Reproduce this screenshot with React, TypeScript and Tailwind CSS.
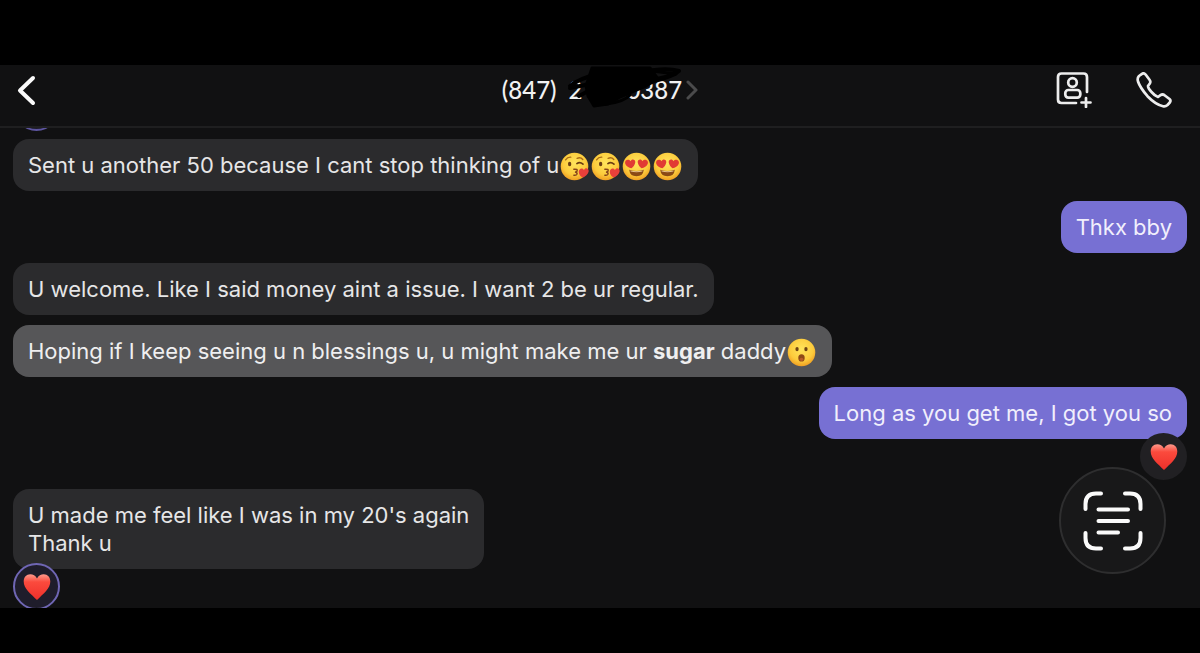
import * as React from "react";
import clsx from "clsx";

interface MessageProps {
  from: "me" | "them";
  highlighted?: boolean;
  className?: string;
  reaction?: React.ReactNode;
  children: React.ReactNode;
}

function Message({ from, highlighted, className, reaction, children }: MessageProps) {
  return (
    <li className={clsx("flex", from === "me" && "justify-end", className)}>
      <div
        className={clsx(
          "relative rounded-2xl px-[15px] py-3",
          from === "me" && "bg-[#7770d3] text-[#f1effc]",
          from === "them" && !highlighted && "bg-[#2b2b2d] text-[#e6e6e7]",
          highlighted && "bg-[#565658] text-[#efeff0]"
        )}
      >
        <p>{children}</p>
        {reaction}
      </div>
    </li>
  );
}

function EmojiBase({ id, label, children }: { id: string; label: string; children: React.ReactNode }) {
  return (
    <svg viewBox="0 0 28 28" role="img" aria-label={label} className="mx-px -my-2 inline-block size-[29px] align-baseline">
      <defs>
        <radialGradient id={id} cx="0.5" cy="0.38" r="0.65">
          <stop offset="0" stopColor="#ffe45c" />
          <stop offset="0.65" stopColor="#fccb3c" />
          <stop offset="1" stopColor="#ee981f" />
        </radialGradient>
      </defs>
      <circle cx="14" cy="14" r="13.3" fill={`url(#${id})`} />
      {children}
    </svg>
  );
}

function KissEmoji() {
  const id = React.useId();
  return (
    <EmojiBase id={id} label="face blowing a kiss">
      <path d="M5.4 7.6Q7.3 4.8 10.4 5" fill="none" stroke="#a86b17" strokeWidth="1.3" strokeLinecap="round" />
      <path d="M16.5 6.2Q19.7 4.6 22 7.2" fill="none" stroke="#a86b17" strokeWidth="1.3" strokeLinecap="round" />
      <ellipse cx="9.3" cy="11.6" rx="1.6" ry="2.2" fill="#6b3d13" />
      <path d="M16.3 11.2Q19.2 9 22.2 11.7" fill="none" stroke="#6b3d13" strokeWidth="1.6" strokeLinecap="round" />
      <path
        d="M13.4 16.6Q17.4 16.3 16.4 18.4Q15.9 19.3 14.5 19.4Q17 19.8 16.3 21.5Q15.7 22.8 13.4 22.4"
        fill="none"
        stroke="#87451a"
        strokeWidth="1.5"
        strokeLinecap="round"
      />
      <path
        d="M23.2 17.4C24.5 14.2 28.6 16.1 27.5 19.4C26.8 21.8 24.5 23.6 22.3 24.7C20 23.8 18.2 21.7 18.1 19.2C18 15.9 21.8 14.6 23.2 17.4Z"
        fill="#e8403a"
      />
    </EmojiBase>
  );
}

function HeartEyesEmoji() {
  const id = React.useId();
  return (
    <EmojiBase id={id} label="smiling face with heart eyes">
      <path
        d="M8.3 9C9.2 5.9 13.3 6.9 12.8 10.2C12.4 12.7 10.7 14.6 9.1 15.8C6.6 15.3 4 13.8 3.1 11.3C2.1 8.1 6.1 6.1 8.3 9Z"
        fill="#e13b34"
      />
      <path
        d="M19.7 9C18.8 5.9 14.7 6.9 15.2 10.2C15.6 12.7 17.3 14.6 18.9 15.8C21.4 15.3 24 13.8 24.9 11.3C25.9 8.1 21.9 6.1 19.7 9Z"
        fill="#e13b34"
      />
      <path d="M7 17.2Q14 19.5 21 17.2Q20.5 23.5 14 23.5Q7.5 23.5 7 17.2Z" fill="#8b4a15" />
      <path d="M8 17.9Q14 19.5 20 17.9L19.6 18.8Q14 20.2 8.4 18.8Z" fill="#e9c58c" />
    </EmojiBase>
  );
}

function OpenMouthEmoji() {
  const id = React.useId();
  return (
    <EmojiBase id={id} label="face with open mouth">
      <ellipse cx="9.7" cy="10.7" rx="1.6" ry="2.1" fill="#6f4413" />
      <ellipse cx="18.3" cy="10.7" rx="1.6" ry="2.1" fill="#6f4413" />
      <ellipse cx="14" cy="19.2" rx="3.1" ry="3.5" fill="#8d4916" />
      <ellipse cx="14" cy="20.6" rx="1.8" ry="1.6" fill="#b85b28" />
    </EmojiBase>
  );
}

function Heart() {
  const id = React.useId();
  return (
    <svg viewBox="0 0 28 28" role="img" aria-label="red heart" className="size-7">
      <defs>
        <linearGradient id={id} x1="0" y1="0" x2="0" y2="1">
          <stop offset="0" stopColor="#ff9a8c" />
          <stop offset="0.3" stopColor="#fb4a3d" />
          <stop offset="1" stopColor="#ee2f2a" />
        </linearGradient>
      </defs>
      <path
        d="M14 5.5C15.5 2.6 18 1.3 20.7 1.3C24.6 1.3 27.3 4.3 27.3 8.5C27.3 15.5 20.5 20.5 14 27C7.5 20.5 0.7 15.5 0.7 8.5C0.7 4.3 3.4 1.3 7.3 1.3C10 1.3 12.5 2.6 14 5.5Z"
        fill={`url(#${id})`}
      />
    </svg>
  );
}

function Reaction({ className }: { className: string }) {
  return (
    <span className={clsx("absolute flex size-[47px] items-center justify-center rounded-full", className)}>
      <Heart />
    </span>
  );
}

function Header() {
  return (
    <header className="relative z-10 grid h-[63px] grid-cols-[1fr_auto_1fr] items-center border-b-2 border-[#1f1f20] bg-[#111112] px-4">
      <button type="button" aria-label="Back" className="w-6 pb-3">
        <svg viewBox="0 0 24 32" className="h-8 w-6" fill="none" stroke="#fafafa" strokeWidth="4" strokeLinecap="round" strokeLinejoin="round">
          <path d="M17 4L4 16.5L17 29" />
        </svg>
      </button>

      <button type="button" className="relative flex items-center gap-1 pb-3 font-[Lato,sans-serif] text-2xl leading-8 font-medium text-[#f2f2f2]">
        <span className="flex gap-3">
          <span>(847)</span>
          <span>2</span>
          <span className="w-5" />
          <span>0387</span>
        </span>
        <svg viewBox="0 0 12 20" className="h-5 w-3" fill="none" stroke="#4b4b4c" strokeWidth="3" strokeLinecap="round" strokeLinejoin="round">
          <path d="M2 2L10 10L2 18" />
        </svg>
        {/* marker scribble over the number */}
        <svg viewBox="0 0 120 44" className="absolute -top-2 left-16 h-11 w-[120px]" fill="none" stroke="#000" strokeLinecap="round" strokeLinejoin="round">
          <path d="M26 2H84L92 13L80 20L68 25L54 31L42 38L28 40L22 30L20 20Z" fill="#000" strokeWidth="3" />
          <path d="M4 20Q14 12 30 9M4 22L24 18M13 30L26 23" strokeWidth="4" />
          <path d="M76 6Q100 1 113 5Q106 11 88 15L60 20" strokeWidth="4" />
          <path d="M78 4L110 8L72 17M40 38Q58 36 64 29" strokeWidth="3" />
        </svg>
      </button>

      <div className="flex items-center justify-end gap-11 pr-3 pb-3">
        <button type="button" aria-label="Add contact">
          <svg viewBox="0 0 36 36" className="size-9" fill="none" stroke="#ededed" strokeWidth="2.7" strokeLinecap="round" strokeLinejoin="round">
            <path d="M20 31H5.5Q2 31 2 27.5V5Q2 1.5 5.5 1.5H27.5Q31 1.5 31 5V20" />
            <circle cx="16.5" cy="10.5" r="4.3" />
            <rect x="9.3" y="18" width="15" height="7.6" rx="3" />
            <path d="M30 26V35M25.5 30.5H34.5" />
          </svg>
        </button>
        <button type="button" aria-label="Call">
          <svg viewBox="0 0 36 36" className="size-9" fill="none" stroke="#ededed" strokeWidth="2.7" strokeLinecap="round" strokeLinejoin="round">
            <path d="M6 1.8L3 4Q1 6 2 9.5Q4 15.5 11.5 24.2Q19.5 32.5 27 34.2Q29.5 34.8 31.5 33L33.8 30.5Q35.2 28.5 33.5 27L28.5 23.2Q26.5 21.8 24.5 23.2L22 25Q19 24 15.5 20Q12 16.5 12 14L13.8 11.5Q15 9.7 13.5 7.7L9.8 2.8Q8 0.5 6 1.8Z" />
          </svg>
        </button>
      </div>
    </header>
  );
}

export default function App() {
  return (
    <div className="min-h-screen bg-black pt-[65px] pb-11 font-[Inter,sans-serif]">
      <main className="relative overflow-hidden bg-[#111112]">
        <Header />
        <ul className="relative flex flex-col gap-[10px] px-[13px] pt-[11px] pb-[39px] text-[22px] leading-7">
          <li className="absolute -top-11 left-0">
            <Reaction className="left-[13px] border-2 border-[#5d559f] bg-[#1d1b2b]" />
          </li>
          <Message from="them">
            Sent u another 50 because I cant stop thinking of u
            <KissEmoji />
            <KissEmoji />
            <HeartEyesEmoji />
            <HeartEyesEmoji />
          </Message>
          <Message from="me">Thkx bby</Message>
          <Message from="them">U welcome. Like I said money aint a issue. I want 2 be ur regular.</Message>
          <Message from="them" highlighted>
            Hoping if I keep seeing u n blessings u, u might make me ur <strong>sugar</strong> daddy
            <OpenMouthEmoji />
          </Message>
          <Message from="me" reaction={<Reaction className="right-0 -bottom-[41px] bg-[#212023]" />}>
            Long as you get me, I got you so
          </Message>
          <Message
            from="them"
            className="mt-10"
            reaction={<Reaction className="-bottom-[41px] left-0 border-2 border-[#6f66b4] bg-[#1f1d2b]" />}
          >
            U made me feel like I was in my 20's again
            <br />
            Thank u
          </Message>
        </ul>

        <button
          type="button"
          aria-label="Scan text"
          className="absolute right-[34px] bottom-[34px] flex size-[107px] items-center justify-center rounded-full border-2 border-[#2e2e2f] bg-[#181819]"
        >
          <svg viewBox="0 0 60 60" className="size-[60px]" fill="none" stroke="#fafafa" strokeWidth="4" strokeLinecap="round">
            <path d="M2.5 18V13Q2.5 2.5 13 2.5H18M42 2.5H47Q57.5 2.5 57.5 13V18M57.5 42V47Q57.5 57.5 47 57.5H42M18 57.5H13Q2.5 57.5 2.5 47V42" />
            <path d="M15.5 18.5H45M15.5 30H45M15.5 41.5H35" />
          </svg>
        </button>
      </main>
    </div>
  );
}
